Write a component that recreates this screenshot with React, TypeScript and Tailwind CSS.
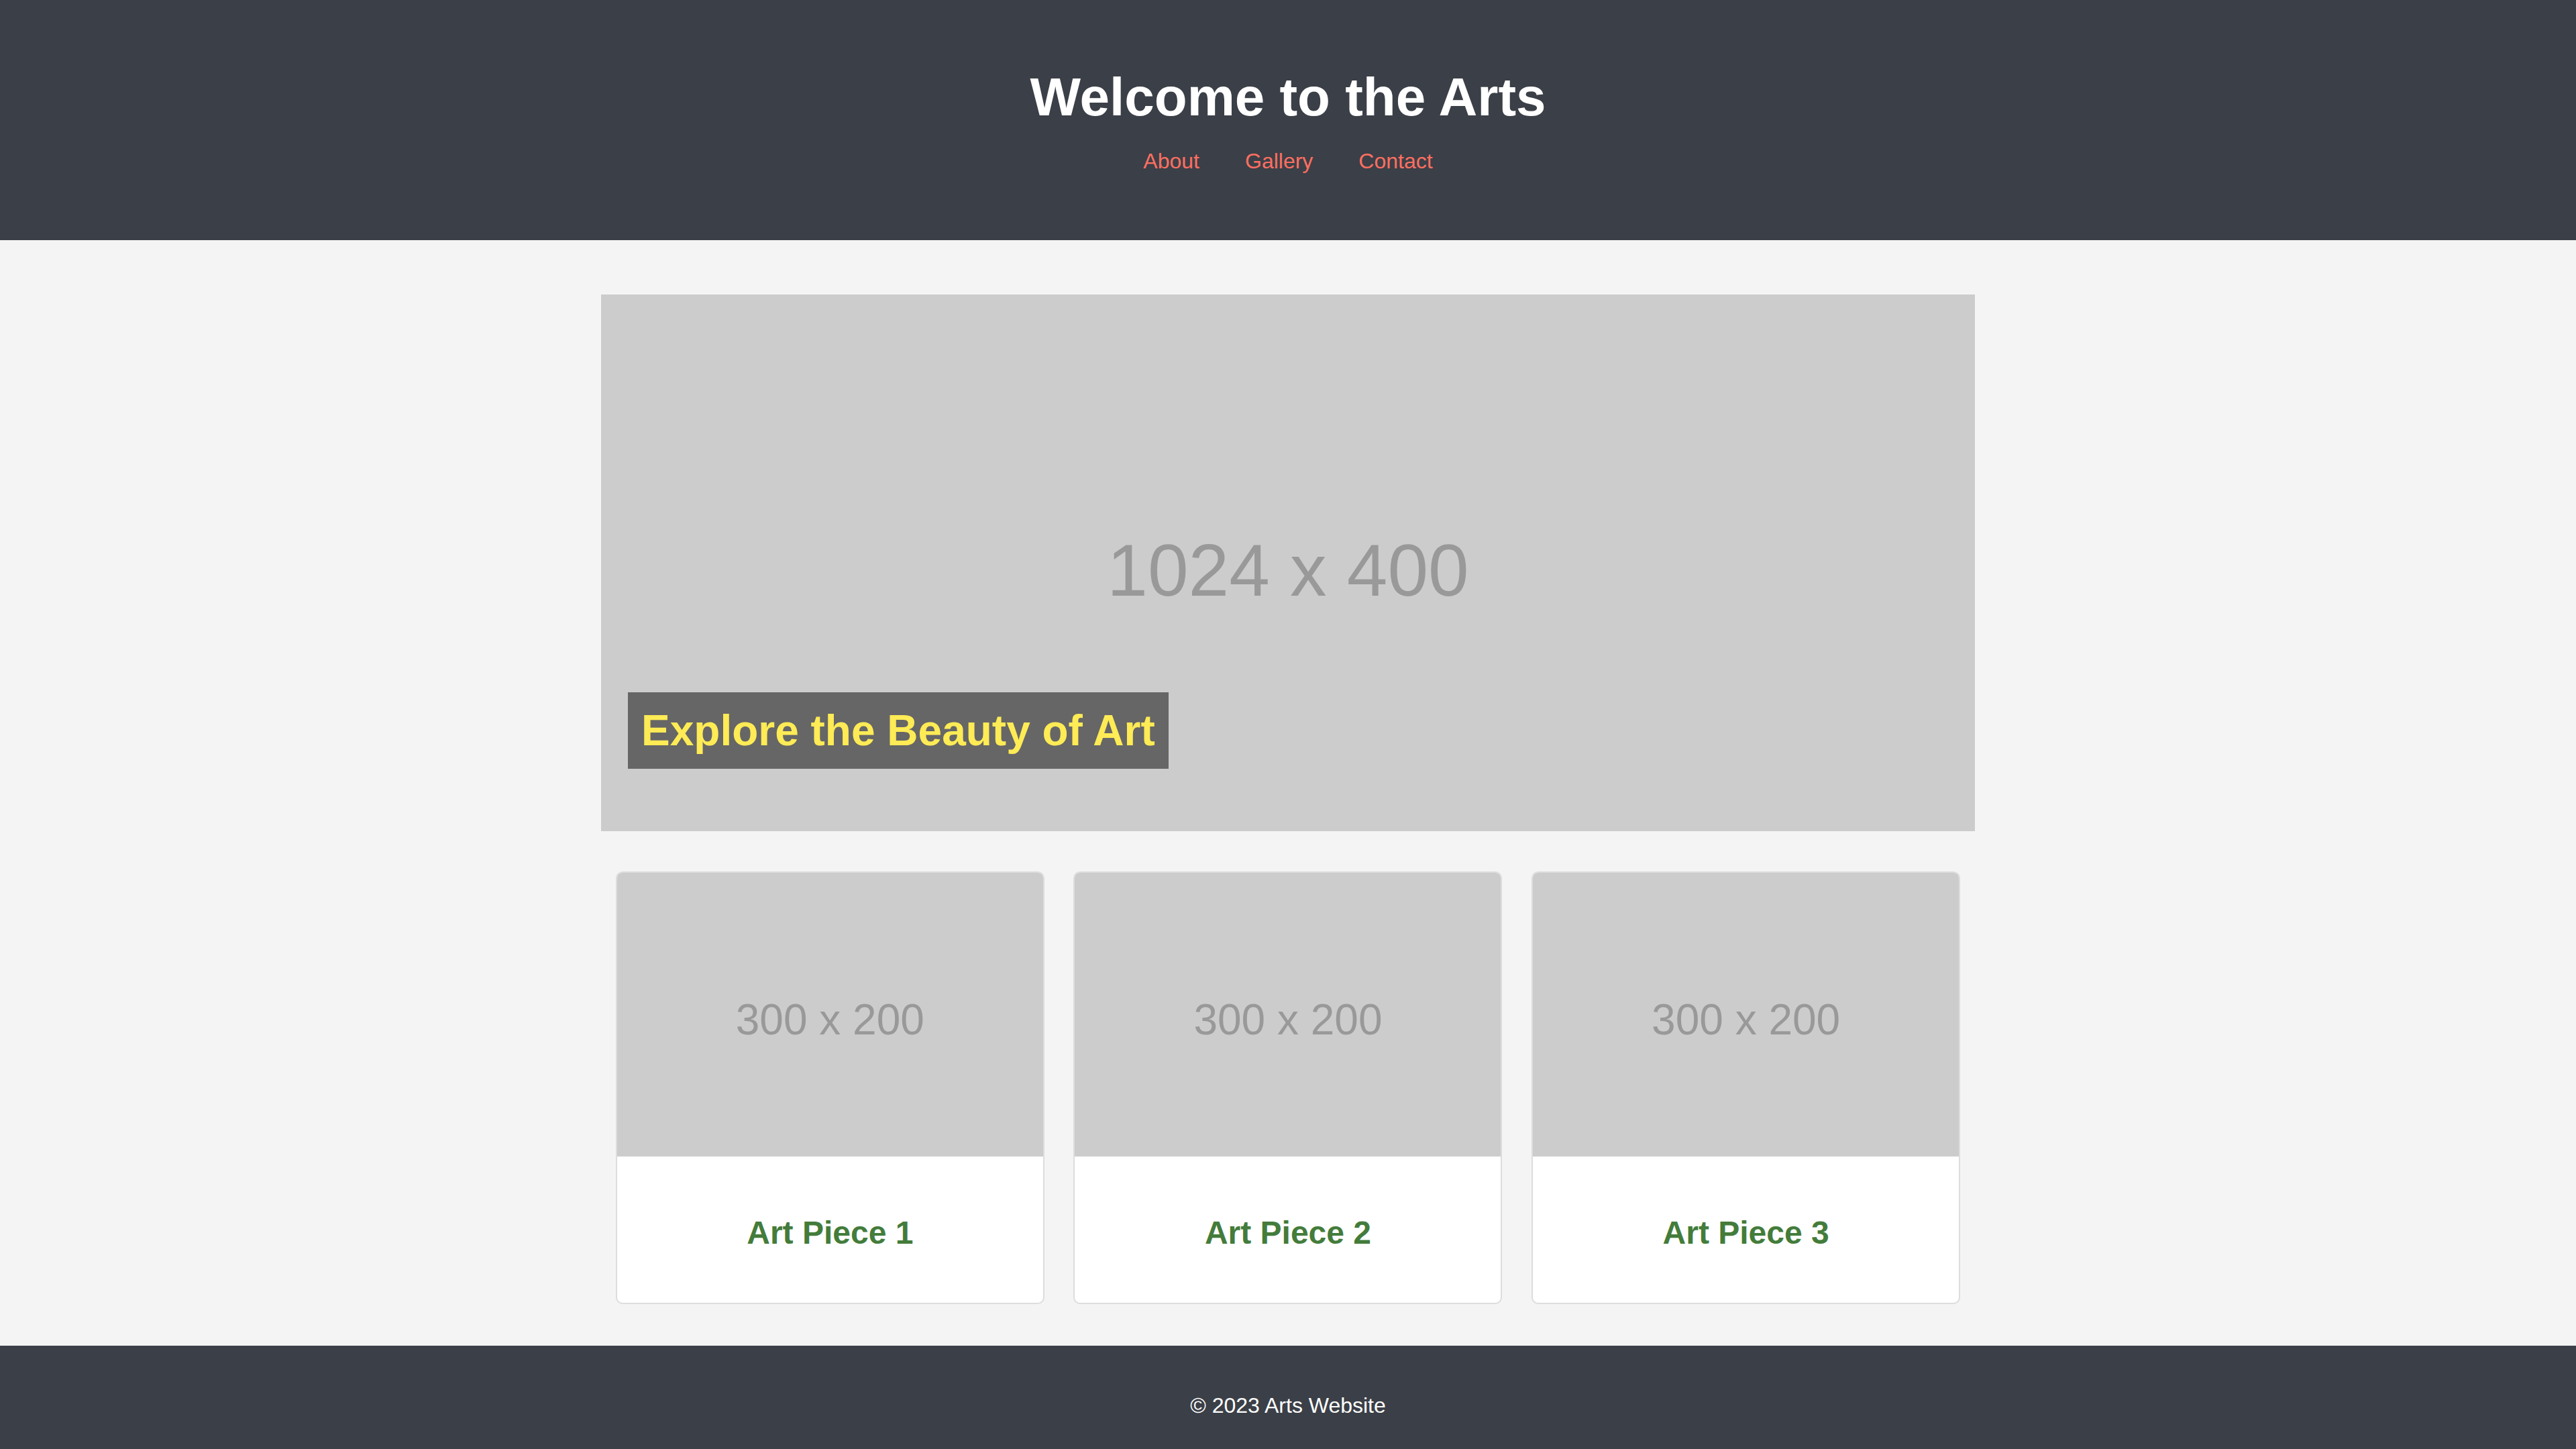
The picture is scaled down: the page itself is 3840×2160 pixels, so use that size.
export default function App() {
  const cards = ["Art Piece 1", "Art Piece 2", "Art Piece 3"];
  return (
    <div className="min-h-screen bg-[#f4f4f4] font-['Liberation_Sans',Arial,sans-serif]">
      <header className="h-[358px] bg-[#3b3f47] flex flex-col items-center pt-[105px]">
        <h1 className="text-[80px] leading-[80px] font-bold text-white">Welcome to the Arts</h1>
        <nav className="mt-[39px] flex gap-[68px] text-[32px] leading-[32px] text-[#ff6f61]">
          <a href="#about">About</a>
          <a href="#gallery">Gallery</a>
          <a href="#contact">Contact</a>
        </nav>
      </header>
      <main className="w-[2048px] mx-auto pt-[81px] pb-[62px]">
        <section className="relative h-[800px] bg-[#cccccc] pt-[357px] text-center">
          <div className="text-[109px] leading-[109px] text-[#999999]">1024 x 400</div>
          <h2 className="absolute left-[40px] bottom-[93px] bg-[#666666] p-[20px] text-[64px] leading-[74px] font-bold text-[#feeb55]">
            Explore the Beauty of Art
          </h2>
        </section>
        <section className="mt-[60px] flex justify-around">
          {cards.map((c) => (
            <div key={c} className="w-[639px] border-2 border-[#dddddd] rounded-[10px] bg-white overflow-hidden">
              <div className="h-[423px] bg-[#cccccc] pt-[187px] text-center text-[64px] leading-[64px] text-[#999999]">
                300 x 200
              </div>
              <div className="pt-[86px] pb-[77px] text-center">
                <h3 className="text-[48px] leading-[55px] font-bold text-[#437c3b]">{c}</h3>
              </div>
            </div>
          ))}
        </section>
      </main>
      <footer className="bg-[#3b3f47] pt-[71px] pb-[71px] text-center">
        <p className="text-[32px] leading-[37px] text-white">© 2023 Arts Website</p>
      </footer>
    </div>
  );
}
